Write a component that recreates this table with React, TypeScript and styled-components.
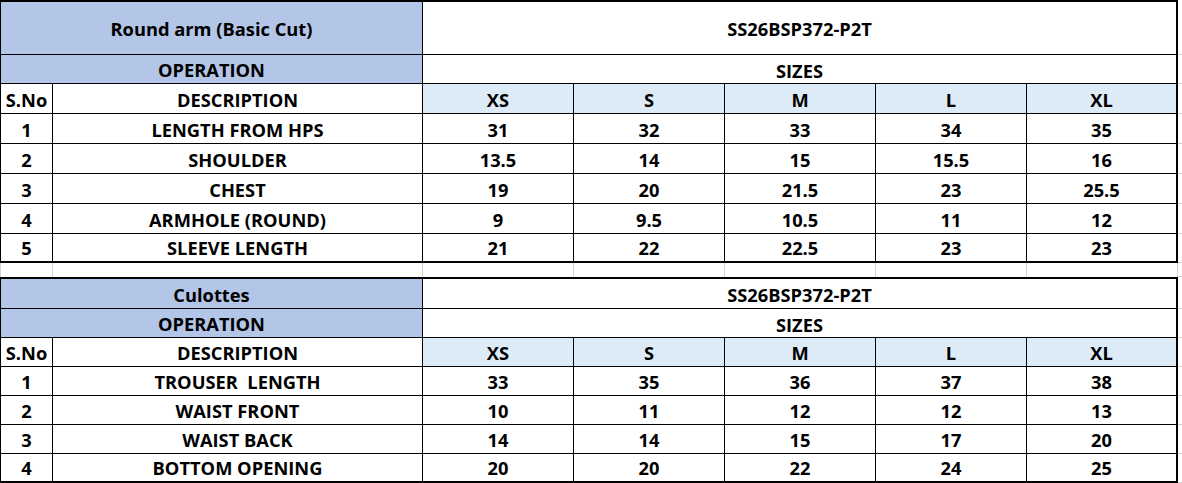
import React from "react";
import styled, { createGlobalStyle } from "styled-components";

const GlobalStyle = createGlobalStyle`
  html, body { margin: 0; padding: 0; background: #ffffff; }
`;

const HEADER_BLUE = "#b4c6e7";
const SIZE_BLUE = "#ddebf7";
const GRID_GRAY = "#d4d4d4";

const Sheet = styled.div`
  width: 1182px;
  display: flex;
  flex-direction: column;
  font-family: "Open Sans", "Noto Sans", sans-serif;
  font-weight: 700;
  font-size: 18.3px;
  line-height: normal;
  color: #000;
`;

const Row = styled.div<{ $h: number }>`
  display: grid;
  grid-template-columns: 53px 370px repeat(5, 151px) 1fr;
  height: ${(p) => p.$h}px;
`;

type CellProps = {
  $span?: number;
  $bg?: string;
  $first?: boolean;
  $last?: boolean;
  $top?: boolean;
  $bottom?: boolean;
  $middle?: boolean;
  $lift?: number;
};

const Cell = styled.div<CellProps>`
  box-sizing: border-box;
  grid-column: span ${(p) => p.$span ?? 1};
  background: ${(p) => p.$bg ?? "#ffffff"};
  border-right: ${(p) => (p.$last ? "2px" : "1px")} solid #000;
  border-bottom: ${(p) => (p.$bottom ? "2px" : "1px")} solid #000;
  border-top: ${(p) => (p.$top ? "2px solid #000" : "none")};
  border-left: ${(p) => (p.$first ? "1px solid #000" : "none")};
  display: flex;
  justify-content: center;
  align-items: ${(p) => (p.$middle ? "center" : "flex-end")};
  padding-bottom: ${(p) => (p.$middle ? 0 : p.$lift ?? 1)}px;
  white-space: pre;
  overflow: hidden;
`;

const GapCell = styled.div<{ $first?: boolean }>`
  box-sizing: border-box;
  background: #ffffff;
  border-right: 1px solid ${GRID_GRAY};
  border-left: ${(p) => (p.$first ? `1px solid ${GRID_GRAY}` : "none")};
`;

const Stub = styled.div`
  box-sizing: border-box;
  border-bottom: 1px solid ${GRID_GRAY};
`;

type Measure = { no: string; desc: string; values: string[] };

const SIZES = ["XS", "S", "M", "L", "XL"];

type TableSpec = {
  title: string;
  style: string;
  titleHeight: number;
  opHeight: number;
  headHeight: number;
  rowHeight: number;
  middleTitle: boolean;
  rows: Measure[];
};

const roundArm: TableSpec = {
  title: "Round arm (Basic Cut)",
  style: "SS26BSP372-P2T",
  titleHeight: 55,
  opHeight: 29,
  headHeight: 30,
  rowHeight: 30,
  middleTitle: true,
  rows: [
    { no: "1", desc: "LENGTH FROM HPS", values: ["31", "32", "33", "34", "35"] },
    { no: "2", desc: "SHOULDER", values: ["13.5", "14", "15", "15.5", "16"] },
    { no: "3", desc: "CHEST", values: ["19", "20", "21.5", "23", "25.5"] },
    { no: "4", desc: "ARMHOLE (ROUND)", values: ["9", "9.5", "10.5", "11", "12"] },
    { no: "5", desc: "SLEEVE LENGTH", values: ["21", "22", "22.5", "23", "23"] },
  ],
};

const culottes: TableSpec = {
  title: "Culottes",
  style: "SS26BSP372-P2T",
  titleHeight: 32,
  opHeight: 29,
  headHeight: 29,
  rowHeight: 29,
  middleTitle: false,
  rows: [
    { no: "1", desc: "TROUSER  LENGTH", values: ["33", "35", "36", "37", "38"] },
    { no: "2", desc: "WAIST FRONT", values: ["10", "11", "12", "12", "13"] },
    { no: "3", desc: "WAIST BACK", values: ["14", "14", "15", "17", "20"] },
    { no: "4", desc: "BOTTOM OPENING", values: ["20", "20", "22", "24", "25"] },
  ],
};

function SpecTable({ spec }: { spec: TableSpec }) {
  const lastIndex = spec.rows.length - 1;
  return (
    <>
      <Row $h={spec.titleHeight}>
        <Cell $span={2} $bg={HEADER_BLUE} $first $top $middle={spec.middleTitle}>
          {spec.title}
        </Cell>
        <Cell $span={5} $last $top $middle={spec.middleTitle}>
          {spec.style}
        </Cell>
        <Stub />
      </Row>
      <Row $h={spec.opHeight}>
        <Cell $span={2} $bg={HEADER_BLUE} $first>
          OPERATION
        </Cell>
        <Cell $span={5} $last $lift={0}>
          SIZES
        </Cell>
        <Stub />
      </Row>
      <Row $h={spec.headHeight}>
        <Cell $first>S.No</Cell>
        <Cell>DESCRIPTION</Cell>
        {SIZES.map((s, i) => (
          <Cell key={s} $bg={SIZE_BLUE} $last={i === SIZES.length - 1}>
            {s}
          </Cell>
        ))}
        <Stub />
      </Row>
      {spec.rows.map((r, idx) => (
        <Row key={r.no} $h={idx === lastIndex ? 29 : spec.rowHeight}>
          <Cell $first $bottom={idx === lastIndex}>
            {r.no}
          </Cell>
          <Cell $bottom={idx === lastIndex}>{r.desc}</Cell>
          {r.values.map((v, i) => (
            <Cell key={i} $bottom={idx === lastIndex} $last={i === r.values.length - 1}>
              {v}
            </Cell>
          ))}
          <Stub />
        </Row>
      ))}
    </>
  );
}

function GapRow() {
  return (
    <Row $h={14}>
      <GapCell $first />
      <GapCell />
      <GapCell />
      <GapCell />
      <GapCell />
      <GapCell />
      <GapCell />
      <Stub />
    </Row>
  );
}

export default function App() {
  return (
    <>
      <GlobalStyle />
      <Sheet>
        <SpecTable spec={roundArm} />
        <GapRow />
        <SpecTable spec={culottes} />
      </Sheet>
    </>
  );
}
